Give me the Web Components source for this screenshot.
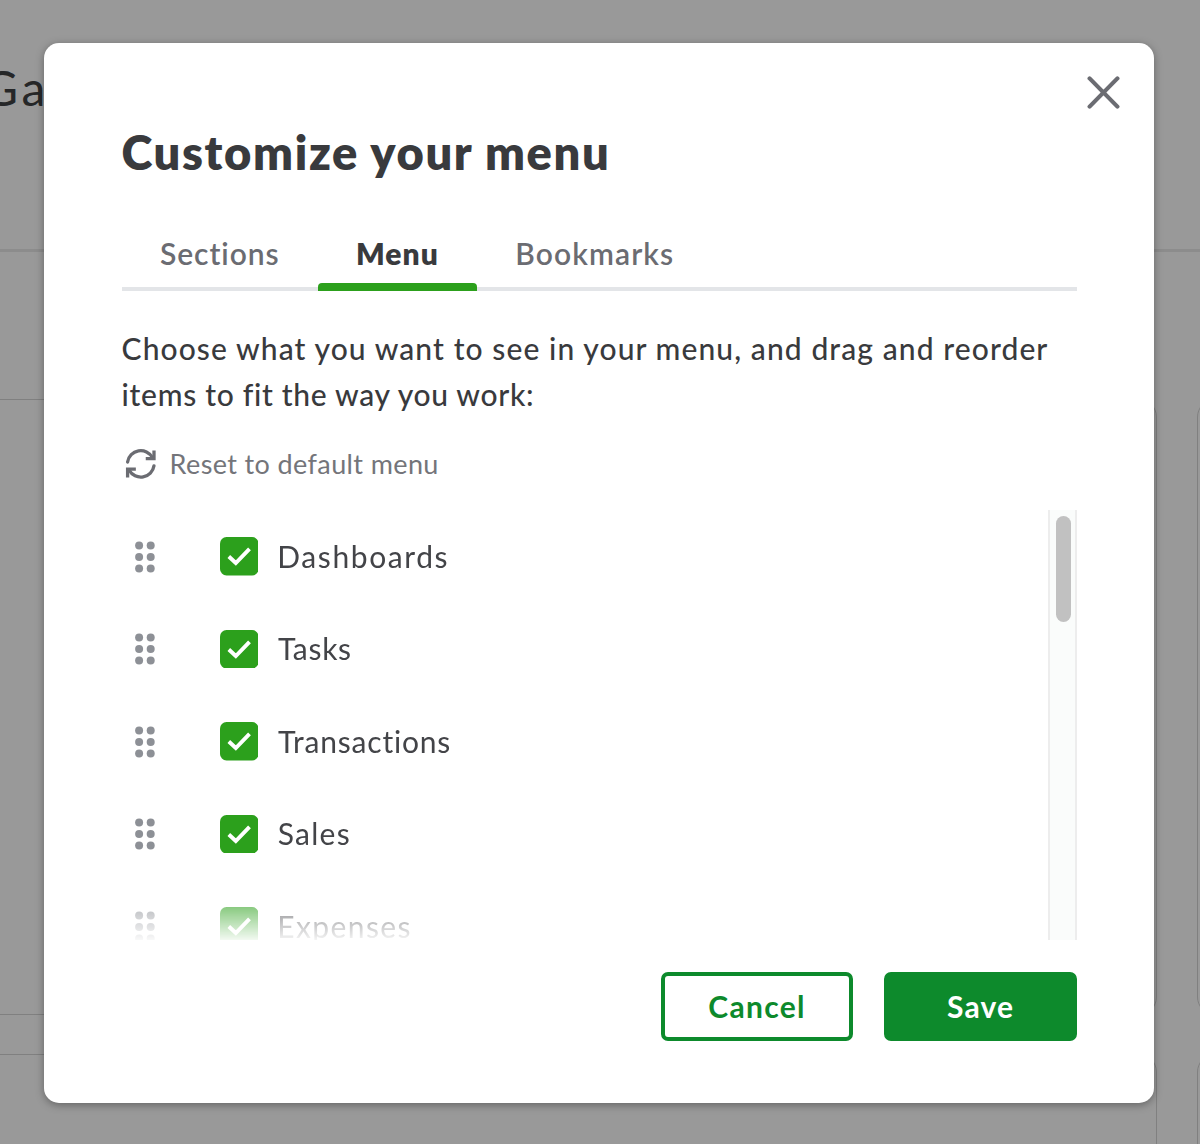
<!DOCTYPE html>
<html lang="en">
<head>
<meta charset="utf-8">
<title>Customize your menu</title>
<style>
body{margin:0;font-family:Lato,"Liberation Sans",sans-serif;color:#393a3d}
</style>
</head>
<body>
<app-screen>
  <app-backdrop slot="backdrop" name="Ga"></app-backdrop>
  <modal-dialog>
    <span slot="title">Customize your menu</span>
    <tab-bar>
      <tab-item style="--ls:.95px">Sections</tab-item>
      <tab-item active style="--ls:1.1px">Menu</tab-item>
      <tab-item style="--ls:1.1px">Bookmarks</tab-item>
    </tab-bar>
    <intro-text><span style="letter-spacing:1.09px">Choose what you want to see in your menu, and drag and reorder</span><br><span style="letter-spacing:.7px">items to fit the way you work:</span></intro-text>
    <reset-link>Reset to default menu</reset-link>
    <scroll-list>
      <menu-row style="--ls:1.6px">Dashboards</menu-row>
      <menu-row style="--ls:.7px;--dx:1px">Tasks</menu-row>
      <menu-row style="--ls:.8px;--dx:1px">Transactions</menu-row>
      <menu-row style="--ls:1.27px;--dx:.8px">Sales</menu-row>
      <menu-row style="--ls:1.4px">Expenses</menu-row>
    </scroll-list>
    <action-button slot="actions" style="--ls:1.3px">Cancel</action-button>
    <action-button slot="actions" primary style="--ls:1.15px">Save</action-button>
  </modal-dialog>
</app-screen>
<script>
const define = (name, html, setup) => customElements.define(name, class extends HTMLElement {
  constructor() {
    super();
    this.attachShadow({mode: 'open'}).innerHTML = html;
  }
  connectedCallback() { if (setup) setup(this, this.shadowRoot); }
});

define('app-screen', `
<style>
:host{display:grid;width:1200px;height:1144px;overflow:hidden;background:#999}
::slotted(*){grid-area:1/1}
</style>
<slot name="backdrop"></slot><slot></slot>`);

define('app-backdrop', `
<style>
:host{display:flex;flex-direction:column;height:1144px;overflow:hidden;background:#999}
header{height:248.5px;border-bottom:3px solid #8c8c8c;flex:none}
.name{margin:60px 0 0 -17px;font-size:48px;line-height:56px;color:#262728;letter-spacing:3.5px}
.cards{display:grid;grid-template-columns:1177px 300px;grid-template-rows:616px 300px;gap:39px 40px;margin:147.5px 0 0 -20px}
.cards div{border:1.5px solid #808080;border-radius:18px}
</style>
<header><div class="name"></div></header>
<div class="cards"><div></div><div></div><div></div><div></div></div>`,
(el, root) => { root.querySelector('.name').textContent = el.getAttribute('name'); });

define('modal-dialog', `
<style>
:host{position:relative;display:flex;flex-direction:column;box-sizing:border-box;width:1109.5px;height:1060px;margin:43px 0 0 44.3px;padding:78.7px 77px 0 77.3px;background:#fff;border-radius:15px;box-shadow:0 2px 8px rgba(0,0,0,.35)}
h1{margin:0 0 42.2px -.2px;font-size:47px;font-weight:800;line-height:60px;letter-spacing:1.65px;white-space:nowrap}
.close{position:absolute;top:33px;right:33.5px;width:33px;height:33px}
footer{display:flex;justify-content:flex-end;gap:31px;margin-top:31.2px}
</style>
<h1><slot name="title"></slot></h1>
<svg class="close" viewBox="0 0 33 33" fill="none" stroke="#6b6c72" stroke-width="4.2" stroke-linecap="round"><path d="M2.6 2.4 30.4 30.6M30.4 2.4 2.6 30.6"/></svg>
<slot></slot>
<footer><slot name="actions"></slot></footer>`);

define('tab-bar', `
<style>:host{display:flex;box-sizing:border-box;height:67.1px;flex:none;box-shadow:inset 0 -4px #e3e5e8}</style>
<slot></slot>`);

define('tab-item', `
<style>
:host{display:flex;flex-direction:column;justify-content:space-between;padding:0 38px 0 38.3px;font-size:30px;line-height:59.5px;font-weight:600;color:#6b6c72;letter-spacing:var(--ls)}
:host([active]){font-weight:800;color:#393a3d}
.bar{height:8px;margin:-1px -38px 0 -38.3px;border-radius:4px 4px 0 0}
:host([active]) .bar{background:#2ca01c}
</style>
<span><slot></slot></span><div class="bar"></div>`);

define('intro-text', `
<style>:host{display:block;margin:34.3px 0 0 0;font-size:30px;line-height:46.2px;font-weight:500;white-space:nowrap}</style>
<slot></slot>`);

define('reset-link', `
<style>
:host{display:flex;align-items:center;height:40px;margin:26.5px 0 26.3px 3px;gap:13px;font-size:27px;line-height:40px;color:#74757a;letter-spacing:.38px}
svg{width:32px;height:32px;flex:none}
</style>
<svg viewBox="0 0 32 32" fill="none" stroke="#6b6c72" stroke-width="3.3"><path stroke-linecap="round" d="M2.6 14A13.3 13.3 0 0 1 27.4 9.6M29 17.8A13.3 13.3 0 0 1 4.2 22.2"/><path stroke-linecap="square" d="M29 4.2V10.6H22.4M2.6 27.8V21.2H9.2"/></svg>
<span><slot></slot></span>`);

define('scroll-list', `
<style>
:host{display:flex;height:430px;flex:none}
.rows{flex:1;overflow:hidden;-webkit-mask-image:linear-gradient(#000 368px,transparent 434px);mask-image:linear-gradient(#000 368px,transparent 434px)}
.track{box-sizing:border-box;width:29px;padding:5.5px 4px 0 6px;border-left:2px solid #ededed;border-right:2px solid #ededed;background:#fafcfb}
.thumb{height:106px;border-radius:8px;background:#c1c1c1}
</style>
<div class="rows"><slot></slot></div>
<div class="track"><div class="thumb"></div></div>`);

define('menu-row', `
<style>
:host{display:flex;align-items:center;height:92.5px;padding-left:12.1px;font-size:30px;line-height:40px;color:#434448;letter-spacing:var(--ls)}
.grip{width:22px;height:34px;margin-right:64.2px;flex:none}
.box{width:38.5px;height:38.5px;margin-right:18.5px;flex:none}
span{padding-bottom:2px;margin-left:var(--dx,.4px)}
</style>
<svg class="grip" viewBox="0 0 22 34" fill="#8d9096"><circle cx="5.1" cy="5.4" r="4"/><circle cx="16.7" cy="5.4" r="4"/><circle cx="5.1" cy="17" r="4"/><circle cx="16.7" cy="17" r="4"/><circle cx="5.1" cy="28.4" r="4"/><circle cx="16.7" cy="28.4" r="4"/></svg>
<svg class="box" viewBox="0 0 38.5 38.5"><rect width="38.5" height="38.5" rx="6.5" fill="#2ca01c"/><path d="M8.8 19.5 15.8 26 29.5 11.9" fill="none" stroke="#fff" stroke-width="3.9"/></svg>
<span><slot></slot></span>`);

define('action-button', `
<style>
:host{display:flex;align-items:center;justify-content:center;box-sizing:border-box;width:192.5px;height:69.5px;padding-bottom:1.6px;border:4px solid #0d8a2c;border-radius:7px;background:#fff;color:#0d8a2c;font-size:30px;font-weight:700;letter-spacing:var(--ls)}
:host([primary]){background:#0d8a2c;color:#fff}
</style>
<slot></slot>`);
</script>
</body>
</html>
